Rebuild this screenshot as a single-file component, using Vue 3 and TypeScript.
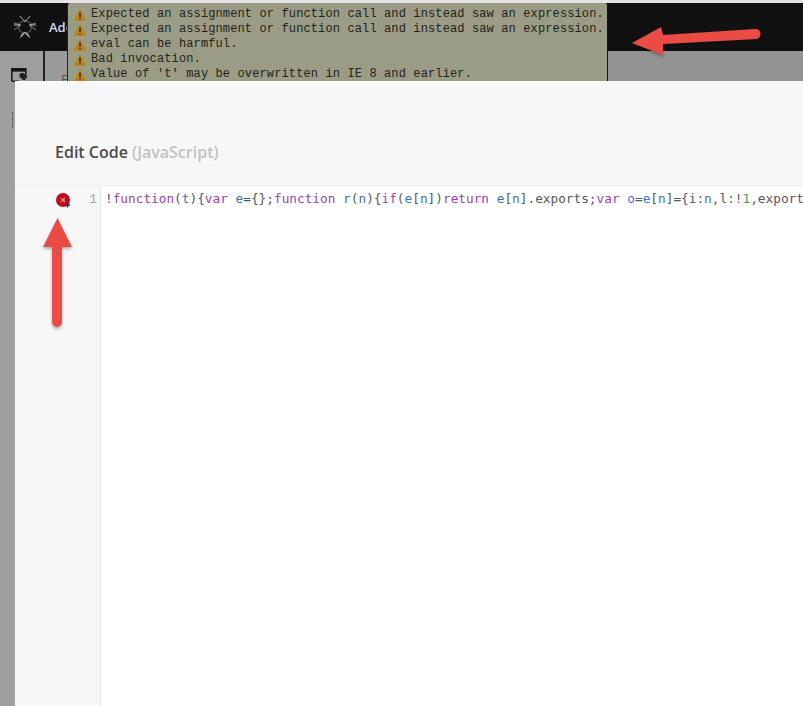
<script setup lang="ts">
const warnings: string[] = [
  'Expected an assignment or function call and instead saw an expression.',
  'Expected an assignment or function call and instead saw an expression.',
  'eval can be harmful.',
  'Bad invocation.',
  "Value of 't' may be overwritten in IE 8 and earlier.",
]
</script>

<template>
  <div class="page">
    <div class="strip"></div>
    <header class="topbar">
      <svg class="logo" width="24" height="24" viewBox="0 0 24 24" fill="none">
        <path d="M12 5 L6 8.5 V15.5 L12 19 L18 15.5 V8.5 Z" stroke="#666" stroke-width="1" />
        <path d="M7 1 L12 7 L17 1 M7 23 L12 17 L17 23" stroke="#a8a8a8" stroke-width="1" />
        <path d="M1 8 L8 10 L1 15 M23 8 L16 10 L23 15" stroke="#808080" stroke-width="1" />
        <path d="M1 10 H7 M17 10 H23 M8 21 L11 18 M16 21 L13 18" stroke="#c4c4c4" stroke-width="1.2" />
      </svg>
      <span class="brand">Adobe</span>
    </header>
    <div class="behind">
      <aside class="rail">
        <svg width="17" height="14" viewBox="0 0 17 14" class="rail-icon">
          <path d="M.8 13.2 V.8 H14.8 V7 M.8 13.2 H8" fill="none" stroke="#141414" stroke-width="1.5" />
          <rect x="1" y="1" width="14" height="2.6" fill="#141414" />
          <path d="M8.5 6.5 L10 5 H12.5 L16.5 8.5 L14 12 H12 L8.5 9 Z" fill="#222" />
        </svg>
        <div class="dots"></div>
      </aside>
      <div class="panel"><span class="panel-letter">F</span></div>
    </div>

    <div class="tooltip">
      <div v-for="(w, i) in warnings" :key="i" class="warn">
        <svg class="warn-icon" width="12" height="12" viewBox="0 0 12 12">
          <path d="M6 .6 L11.6 11.4 H.4 Z" fill="#bd8412" stroke="#bd8412" stroke-width=".8" stroke-linejoin="round" />
          <rect x="5.3" y="3.6" width="1.4" height="4.4" fill="#2a2208" />
          <rect x="5.3" y="9" width="1.4" height="1.4" fill="#2a2208" />
        </svg>
        <span>{{ w }}</span>
      </div>
    </div>

    <section class="modal">
      <h1 class="title">Edit Code <span class="lang">(JavaScript)</span></h1>
      <div class="editor">
        <div class="gutter">
          <svg class="err" width="16" height="16" viewBox="0 0 16 16">
            <circle cx="7" cy="7" r="7" fill="#c00d1e" />
            <path d="M5 5 L9 9 M9 5 L5 9" stroke="#eb8f98" stroke-width="1.1" />
            <path d="M11.5 9.5 V14.5 M9 12 H14" stroke="#333" stroke-width="1.6" />
          </svg>
          <span class="lineno">1</span>
        </div>
        <pre class="code"><span class="p">!</span><span class="k">function</span><span class="p">(</span><span class="v">t</span><span class="p">){</span><span class="k">var</span> <span class="v">e</span><span class="p">={};</span><span class="k">function</span> <span class="v">r</span><span class="p">(</span><span class="v">n</span><span class="p">){</span><span class="k">if</span><span class="p">(</span><span class="v">e</span><span class="p">[</span><span class="v">n</span><span class="p">])</span><span class="k">return</span> <span class="v">e</span><span class="p">[</span><span class="v">n</span><span class="p">].exports;</span><span class="k">var</span> <span class="v">o</span><span class="p">=</span><span class="v">e</span><span class="p">[</span><span class="v">n</span><span class="p">]={i:</span><span class="v">n</span><span class="p">,l:!</span><span class="g">1</span><span class="p">,export</span></pre>
      </div>
    </section>

    <svg class="arrows" width="803" height="706" viewBox="0 0 803 706">
      <defs>
        <filter id="sh" x="-20%" y="-20%" width="140%" height="140%">
          <feDropShadow dx="0" dy="2" stdDeviation="1.5" flood-color="#000" flood-opacity=".3" />
        </filter>
      </defs>
      <g filter="url(#sh)" fill="#ea4c45">
        <path d="M632 43 L661 27 L663 35 L755 29 A5 5 0 0 1 756 39 L663 44 L663 55 Z" />
        <path d="M57.5 218 L72 247 L62 247 L62 322 A5 5 0 0 1 52 322 L52 247 L43 247 Z" />
      </g>
    </svg>
  </div>
</template>

<style scoped>
.page {
  position: relative;
  width: 803px;
  height: 706px;
  overflow: hidden;
  display: flex;
  flex-direction: column;
  background: #939393;
  font-family: "Open Sans", "Liberation Sans", sans-serif;
}
.strip {
  height: 3px;
  background: #e4e4e4;
  flex: none;
}
.topbar {
  height: 48px;
  flex: none;
  background: #111;
  display: flex;
  align-items: center;
  padding-left: 13px;
  gap: 12px;
}
.logo { flex: none; }
.brand {
  color: #cfd8ea;
  font-size: 13px;
  font-weight: 600;
}
.behind {
  flex: 1;
  display: flex;
}
.rail {
  width: 32px;
  background: #9f9f9f;
  border-right: 2px solid #222;
  padding: 17px 0 0 11px;
}
.rail-icon { display: block; }
.dots {
  width: 1px;
  height: 16px;
  margin: 30px 0 0 1px;
  border-left: 1px dotted #444;
}
.panel {
  flex: none;
  width: 22px;
  background: #9a9a9a;
  padding: 16px 0 0 16px;
}
.panel-letter {
  font-size: 13px;
  color: #555;
}
.tooltip {
  position: absolute;
  left: 67px;
  top: 3px;
  width: 541px;
  height: 78px;
  box-sizing: border-box;
  background: #9b9c85;
  border-right: 1px solid #111;
  border-left: 1px solid #222;
  border-top-left-radius: 3px;
  border-top-right-radius: 3px;
  padding: 4px 0 0 7px;
  font-family: "Liberation Mono", "DejaVu Sans Mono", monospace;
  font-size: 12px;
  letter-spacing: 0.125px;
  line-height: 15px;
  color: #22231c;
  overflow: hidden;
}
.warn {
  display: flex;
  align-items: center;
  height: 15px;
  gap: 4px;
  white-space: nowrap;
}
.warn-icon { flex: none; margin-left: -1px; margin-right: 1px; }
.modal {
  position: absolute;
  left: 15px;
  top: 81px;
  right: 0;
  bottom: 0;
  background: #f7f7f7;
  display: flex;
  flex-direction: column;
}
.title {
  margin: 0;
  height: 104px;
  box-sizing: border-box;
  padding: 61px 0 0 40px;
  font-size: 16px;
  line-height: 20px;
  font-weight: 600;
  color: #4b4b4b;
  flex: none;
}
.lang { color: #c2c2c2; }
.editor {
  flex: 1;
  display: flex;
  border-top: 1px solid #ececec;
  min-height: 0;
}
.gutter {
  width: 41px;
  flex: none;
  background: #f7f7f7;
  border-right: 1px solid #e6e6e6;
  display: flex;
  align-items: flex-start;
  justify-content: space-between;
  padding: 7px 3px 0 41px;
}
.err { flex: none; }
.lineno {
  font-family: "Liberation Mono", "DejaVu Sans Mono", monospace;
  font-size: 12.8px;
  line-height: 14px;
  color: #a9a9a9;
}
.code {
  flex: 1;
  margin: 0;
  background: #fff;
  padding: 5px 0 0 4px;
  font-family: "DejaVu Sans Mono", "Liberation Mono", monospace;
  font-size: 12.75px;
  line-height: 16px;
  color: #4d5560;
  white-space: pre;
  overflow: hidden;
  min-width: 0;
}
.p { color: #53585f; }
.k { color: #9b3fb0; }
.v { color: #3f6fc4; }
.g { color: #3d9a5c; }
.arrows {
  position: absolute;
  left: 0;
  top: 0;
  pointer-events: none;
}
</style>

<style>
html, body { margin: 0; background: #fff; }
</style>
